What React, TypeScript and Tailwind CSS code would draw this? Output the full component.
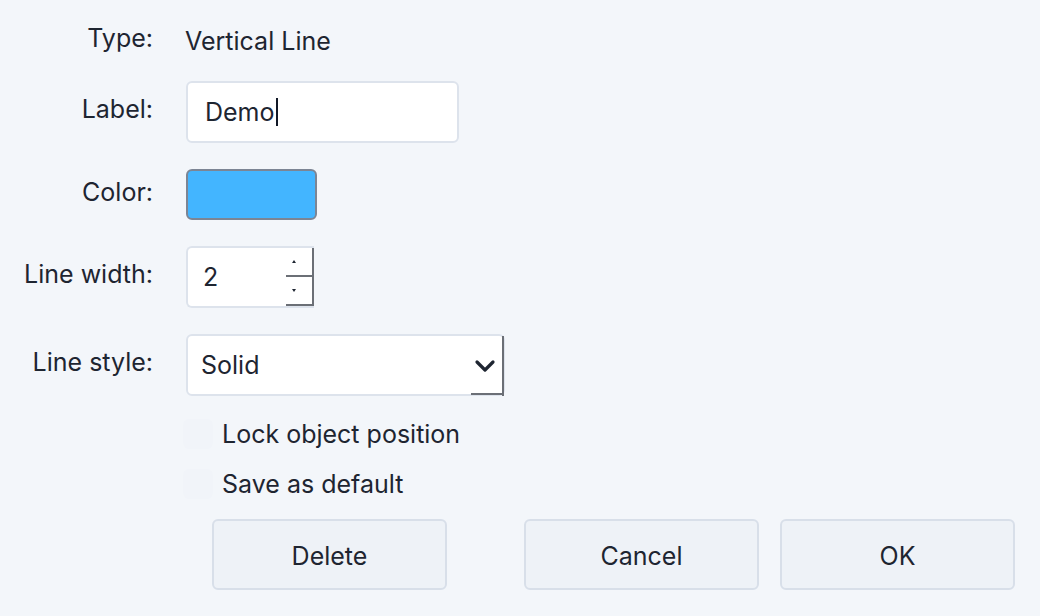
import { ChevronDown } from "lucide-react"

function Row({
  label,
  children,
  className = "",
}: {
  label: string
  children: React.ReactNode
  className?: string
}) {
  return (
    <div className={`flex items-center ${className}`}>
      <div className="w-[153px] shrink-0 pb-[5px] text-right">{label}</div>
      <div className="ml-[33px] flex items-center">{children}</div>
    </div>
  )
}

function Checkbox({ label, className = "" }: { label: string; className?: string }) {
  return (
    <div className={`flex items-center ${className}`}>
      <span className="h-[30px] w-[30px] rounded-md bg-[#f1f4f9]" />
      <span className="ml-[9px]">{label}</span>
    </div>
  )
}

export default function App() {
  return (
    <div
      className="h-[616px] w-[1040px] bg-[#f3f6fa] text-[25px] leading-none text-[#1e2531]"
      style={{ fontFamily: "Inter, 'Liberation Sans', sans-serif" }}
    >
      <div className="flex flex-col pt-[26px]">
        <Row label="Type:" className="h-[30px]">
          <span className="-ml-px">Vertical Line</span>
        </Row>

        <Row label="Label:" className="mt-[25px]">
          <div className="flex h-[62px] w-[273px] items-center rounded-md border-2 border-[#dde3ec] bg-white pl-[17px]">
            <span>Demo</span>
            <span className="ml-px h-[28px] w-[2px] bg-[#111827]" />
          </div>
        </Row>

        <Row label="Color:" className="mt-[26px]">
          <div className="h-[51px] w-[131px] rounded-md border-2 border-[#7c8594] bg-[#43b5ff]" />
        </Row>

        <Row label="Line width:" className="mt-[26px]">
          <div className="flex h-[62px] w-[128px] rounded-l-md border-y-2 border-l-2 border-[#dde3ec] bg-white">
            <div className="flex flex-1 items-center pl-[15px]">2</div>
            <div className="flex w-[28px] flex-col">
              <div className="flex flex-1 items-center justify-center border-r-2 border-b-2 border-[#6b6f76] pr-[10px]">
                <span className="h-0 w-0 border-x-[2px] border-b-[3px] border-x-transparent border-b-[#1e2531]" />
              </div>
              <div className="flex flex-1 items-center justify-center border-r-2 border-b-2 border-[#6b6f76] pr-[10px]">
                <span className="h-0 w-0 border-x-[2px] border-t-[3px] border-x-transparent border-t-[#1e2531]" />
              </div>
            </div>
          </div>
        </Row>

        <Row label="Line style:" className="mt-[26px]">
          <div className="relative flex h-[62px] w-[319px] items-center rounded-md border-2 border-[#dde3ec] bg-white pl-[13px]">
            <span>Solid</span>
            <ChevronDown className="absolute right-[2px] top-[14px] text-[#1e2531]" size={32} strokeWidth={2.4} />
            <span className="absolute -right-[1px] top-0 h-[60px] w-[2px] bg-[#6b6f76]" />
            <span className="absolute -bottom-[1px] right-0 h-[2px] w-[32px] bg-[#6b6f76]" />
          </div>
        </Row>

        <div className="ml-[183px] mt-[23px] flex flex-col">
          <Checkbox label="Lock object position" />
          <Checkbox label="Save as default" className="mt-[20px]" />
        </div>

        <div className="mt-[20px] flex pl-[212px]">
          <button className="h-[71px] w-[235px] rounded-md border-2 border-[#d8dfe9] bg-[#eef2f7] pt-[3px]">
            Delete
          </button>
          <button className="ml-[77px] h-[71px] w-[235px] rounded-md border-2 border-[#d8dfe9] bg-[#eef2f7] pt-[3px]">
            Cancel
          </button>
          <button className="ml-[21px] h-[71px] w-[235px] rounded-md border-2 border-[#d8dfe9] bg-[#eef2f7] pt-[3px]">
            OK
          </button>
        </div>
      </div>
    </div>
  )
}
